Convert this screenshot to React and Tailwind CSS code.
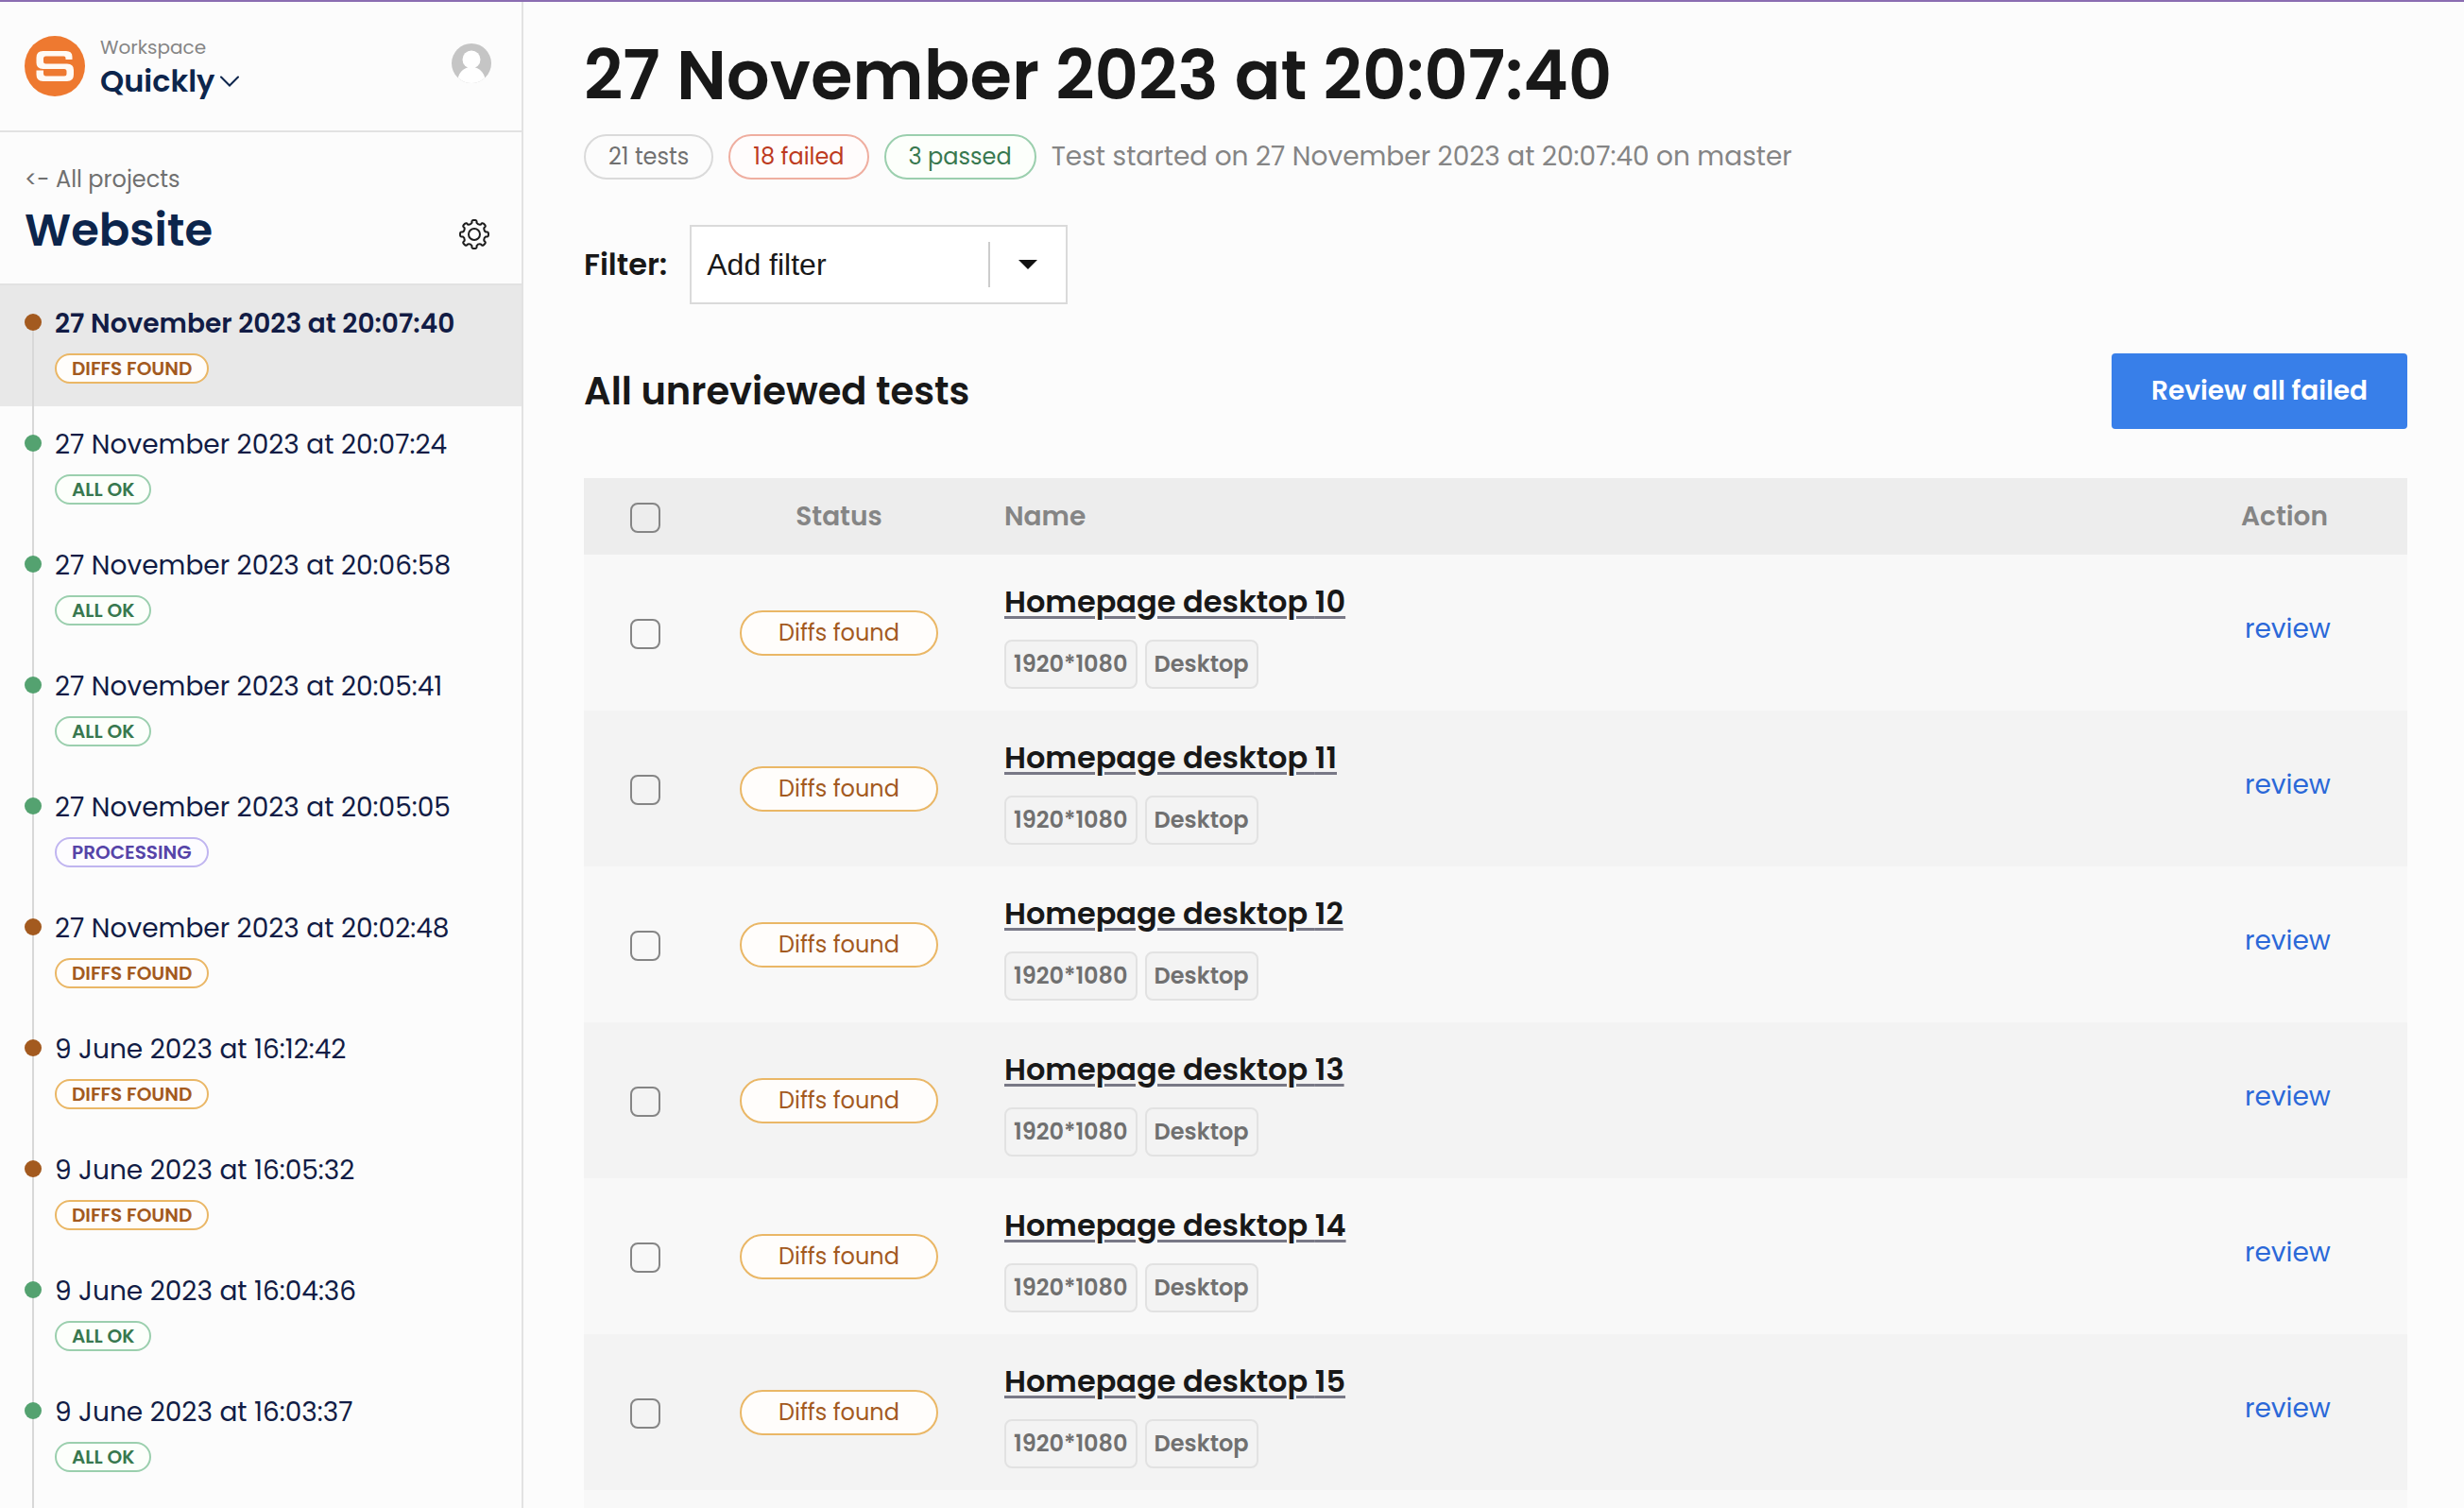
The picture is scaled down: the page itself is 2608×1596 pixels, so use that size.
const builds = [
  { date: '27 November 2023 at 20:07:40', status: 'diffs', dot: 'bg-[#a35a1f]', active: true },
  { date: '27 November 2023 at 20:07:24', status: 'ok', dot: 'bg-[#54a270]' },
  { date: '27 November 2023 at 20:06:58', status: 'ok', dot: 'bg-[#54a270]' },
  { date: '27 November 2023 at 20:05:41', status: 'ok', dot: 'bg-[#54a270]' },
  { date: '27 November 2023 at 20:05:05', status: 'processing', dot: 'bg-[#54a270]' },
  { date: '27 November 2023 at 20:02:48', status: 'diffs', dot: 'bg-[#a35a1f]' },
  { date: '9 June 2023 at 16:12:42', status: 'diffs', dot: 'bg-[#a35a1f]' },
  { date: '9 June 2023 at 16:05:32', status: 'diffs', dot: 'bg-[#a35a1f]' },
  { date: '9 June 2023 at 16:04:36', status: 'ok', dot: 'bg-[#54a270]' },
  { date: '9 June 2023 at 16:03:37', status: 'ok', dot: 'bg-[#54a270]' },
];

const statuses = {
  diffs: { label: 'DIFFS FOUND', style: 'border-[#eab766] bg-[#fffdfb] text-[#a35a1f]' },
  ok: { label: 'ALL OK', style: 'border-[#9bcfae] bg-[#fcfffb] text-[#38784f]' },
  processing: { label: 'PROCESSING', style: 'border-[#c0b5f0] bg-[#fdfcff] text-[#5644a8]' },
};

const tests = [10, 11, 12, 13, 14, 15];

function Logo() {
  return (
    <svg viewBox="0 0 64 64" className="size-16 shrink-0" aria-hidden="true">
      <circle cx="32" cy="32" r="32" fill="#ee7930" />
      <path
        d="M50.500 25h-7v-1.500q0-2-2-2H22.500q-2.500 0-2.500 2.500v3q0 2.500 2.500 2.500H45q7 0 7 6.500v5q0 7-7 7H19.500q-7 0-7-7V36.500h7.500v3q0 3 2.500 3H42q2.500 0 2.500-2.500v-2.500q0-2.500-2.500-2.500H19.500q-7 0-7-6.500v-5.500q0-7 7-7H44q6.500 0 6.500 6z"
        fill="#fffaf5"
      />
    </svg>
  );
}

function Avatar() {
  return (
    <svg viewBox="0 0 42 42" className="size-[42px]" aria-hidden="true">
      <clipPath id="avatar">
        <circle cx="21" cy="21" r="21" />
      </clipPath>
      <g clipPath="url(#avatar)">
        <rect width="42" height="42" fill="#c5c5c5" />
        <circle cx="21" cy="17" r="9.500" fill="#fff" />
        <path d="M6 42c0-10 6-17 15-17s15 7 15 17z" fill="#fff" />
      </g>
    </svg>
  );
}

// Eight rounded teeth with scooped valleys between them
const polar = (radius, angle) =>
  `${(16 + radius * Math.sin(angle)).toFixed(2)} ${(16 - radius * Math.cos(angle)).toFixed(2)}`;

const gearPath = Array.from({ length: 8 }, (_, i) => {
  const a = (i * Math.PI) / 4;
  const next = a + Math.PI / 4;
  return [
    `${i === 0 ? 'M' : 'L'}${polar(12.5, a - 0.2)}`,
    `Q${polar(15, a - 0.2)} ${polar(15, a - 0.08)}`,
    `L${polar(15, a + 0.08)}`,
    `Q${polar(15, a + 0.2)} ${polar(12.5, a + 0.2)}`,
    `Q${polar(10.5, a + Math.PI / 8)} ${polar(12.5, next - 0.2)}`,
  ].join('');
}).join('');

function GearIcon() {
  return (
    <svg viewBox="0 0 32 32" className="size-8" fill="none" stroke="#1d1d1d" strokeWidth="2" strokeLinejoin="round" aria-hidden="true">
      <circle cx="16" cy="16" r="6" />
      <path d={`${gearPath}z`} />
    </svg>
  );
}

function Sidebar() {
  return (
    <aside className="flex w-[554px] shrink-0 flex-col border-r-2 border-[#e2e2e2]">
      <div className="flex h-[138px] shrink-0 items-start border-b-2 border-[#e2e2e2] pt-9 pr-8 pl-[26px]">
        <Logo />
        <div className="-mt-0.5 ml-4 flex-1">
          <p className="text-[20px] leading-7 text-[#858585]">Workspace</p>
          <button className="flex items-center gap-1.5 text-[32px] leading-[44px] font-semibold text-[#0c254c]">
            Quickly
            <svg viewBox="0 0 20 12" className="h-3 w-5" fill="none" stroke="currentColor" strokeWidth="2" strokeLinecap="round" aria-hidden="true">
              <path d="M1 1.500l9 9 9-9" />
            </svg>
          </button>
        </div>
        <button aria-label="Account" className="mt-2">
          <Avatar />
        </button>
      </div>

      <div className="flex h-[162px] shrink-0 items-end justify-between border-b-2 border-[#e2e2e2] pr-[34px] pb-6 pl-[26px]">
        <div>
          <a href="#" className="block text-[24px] leading-[44px] text-[#707070]">&lt;- All projects</a>
          <h2 className="text-[48px] leading-[64px] font-semibold text-[#0c254c]">Website</h2>
        </div>
        <button aria-label="Project settings" className="mb-3">
          <GearIcon />
        </button>
      </div>

      <ul className="relative flex-1">
        {builds.map((build) => (
          <li key={build.date} className={build.active ? 'h-32 bg-[#e8e8e8]' : 'h-32'}>
            <a href="#" className="flex h-full gap-[14px] pt-5 pl-[26px]">
              <span className={`z-10 mt-[10px] size-[18px] rounded-full ${build.dot}`} />
              <span className="flex flex-col items-start gap-[10px]">
                <span className={`text-[28px] leading-[42px] text-[#121c45] ${build.active ? 'font-semibold' : ''}`}>
                  {build.date}
                </span>
                <span className={`flex h-8 items-center rounded-full border-2 px-4 text-[20px] leading-none font-semibold ${statuses[build.status].style}`}>
                  {statuses[build.status].label}
                </span>
              </span>
            </a>
          </li>
        ))}
        {/* Timeline */}
        <span className="absolute top-10 bottom-0 left-[34px] w-0.5 bg-[#d8d8d8]" />
      </ul>
    </aside>
  );
}

function Checkbox({ label }) {
  return (
    <input
      type="checkbox"
      aria-label={label}
      className="mx-auto mt-0.5 block size-8 appearance-none rounded-lg border-2 border-[#858585] checked:bg-[#387fe9]"
    />
  );
}

function TestsTable() {
  return (
    <table className="mt-[52px] w-full table-fixed text-left">
      <colgroup>
        <col className="w-[130px]" />
        <col className="w-[280px]" />
        <col />
        <col className="w-[216px]" />
      </colgroup>
      <thead>
        <tr className="h-[81px] bg-[#ededed] text-[28px] leading-10 text-[#858585]">
          <th>
            <Checkbox label="Select all tests" />
          </th>
          <th className="text-center font-semibold">Status</th>
          <th className="pl-[35px] font-semibold">Name</th>
          <th className="pl-10 font-semibold">Action</th>
        </tr>
      </thead>
      <tbody>
        {tests.map((id) => (
          <tr key={id} className="h-[165px] odd:bg-[#f8f8f8] even:bg-[#f3f3f3]">
            <td>
              <Checkbox label={`Select Homepage desktop ${id}`} />
            </td>
            <td>
              <span className="mx-auto flex h-12 w-[210px] items-center justify-center rounded-full border-2 border-[#eab766] bg-[#fffdfb] text-[24px] text-[#a35a1f]">
                Diffs found
              </span>
            </td>
            <td className="pt-1.5 pl-[35px]">
              <a
                href="#"
                className="block text-[32px] leading-10 font-semibold text-[#181818] underline decoration-[#787886] decoration-[3px] underline-offset-4"
              >
                Homepage desktop {id}
              </a>
              <div className="mt-5 flex gap-2 text-[24px] font-semibold text-[#707070]">
                <span className="flex h-[52px] items-center rounded-lg border-2 border-[#e2e2e2] bg-[#f3f3f3] px-2">1920*1080</span>
                <span className="flex h-[52px] items-center rounded-lg border-2 border-[#e2e2e2] bg-[#f3f3f3] px-2">Desktop</span>
              </div>
            </td>
            <td className="pb-2 pl-11">
              <a href="#" className="text-[28px] leading-10 text-[#2b68d8]">review</a>
            </td>
          </tr>
        ))}
        {/* Spacer below the last test */}
        <tr className="h-10 bg-[#f8f8f8]">
          <td colSpan={4} />
        </tr>
      </tbody>
    </table>
  );
}

export default function App() {
  return (
    <div className="flex h-screen overflow-hidden border-t-2 border-[#8b6db2] bg-[#fcfcfc] font-['Poppins','Inter',sans-serif] antialiased">
      <Sidebar />
      <main className="min-w-0 flex-1 overflow-y-auto pt-[34px] pr-[60px] pl-16 [scrollbar-width:none]">
        <h1 className="text-[72px] leading-[88px] font-semibold text-[#181818]">27 November 2023 at 20:07:40</h1>

        <div className="mt-[18px] flex items-center gap-4 text-[24px]">
          <span className="flex h-12 items-center rounded-full border-2 border-[#dadada] px-6 text-[#707070]">21 tests</span>
          <span className="flex h-12 items-center rounded-full border-2 border-[#efaea0] bg-[#fffcfc] px-6 text-[#bd3a20]">18 failed</span>
          <span className="flex h-12 items-center rounded-full border-2 border-[#9bcfae] bg-[#fcfffb] px-6 text-[#38784f]">3 passed</span>
          <p className="text-[28px] text-[#858585]">Test started on 27 November 2023 at 20:07:40 on master</p>
        </div>

        <div className="mt-12 flex items-center gap-6">
          <label htmlFor="filter" className="text-[32px] font-semibold text-[#181818]">Filter:</label>
          <div className="relative">
            <select
              id="filter"
              className="block h-[84px] w-[400px] appearance-none border-2 border-[#dadada] bg-white px-4 font-['Liberation_Sans',sans-serif] text-[32px] text-[#181818]"
            >
              <option>Add filter</option>
            </select>
            <div className="pointer-events-none absolute inset-y-4 right-8 flex items-center gap-[30px]">
              <span className="h-12 w-0.5 bg-[#cccccc]" />
              <svg viewBox="0 0 20 10" className="h-[10px] w-5" aria-hidden="true">
                <path d="M0 0h20L10 10z" fill="#111" />
              </svg>
            </div>
          </div>
        </div>

        <div className="mt-[52px] flex items-center justify-between">
          <h2 className="text-[40px] leading-[52px] font-semibold text-[#181818]">All unreviewed tests</h2>
          <button className="h-20 rounded-sm bg-[#387fe9] px-[42px] text-[28px] font-semibold text-white">Review all failed</button>
        </div>

        <TestsTable />
      </main>
    </div>
  );
}
